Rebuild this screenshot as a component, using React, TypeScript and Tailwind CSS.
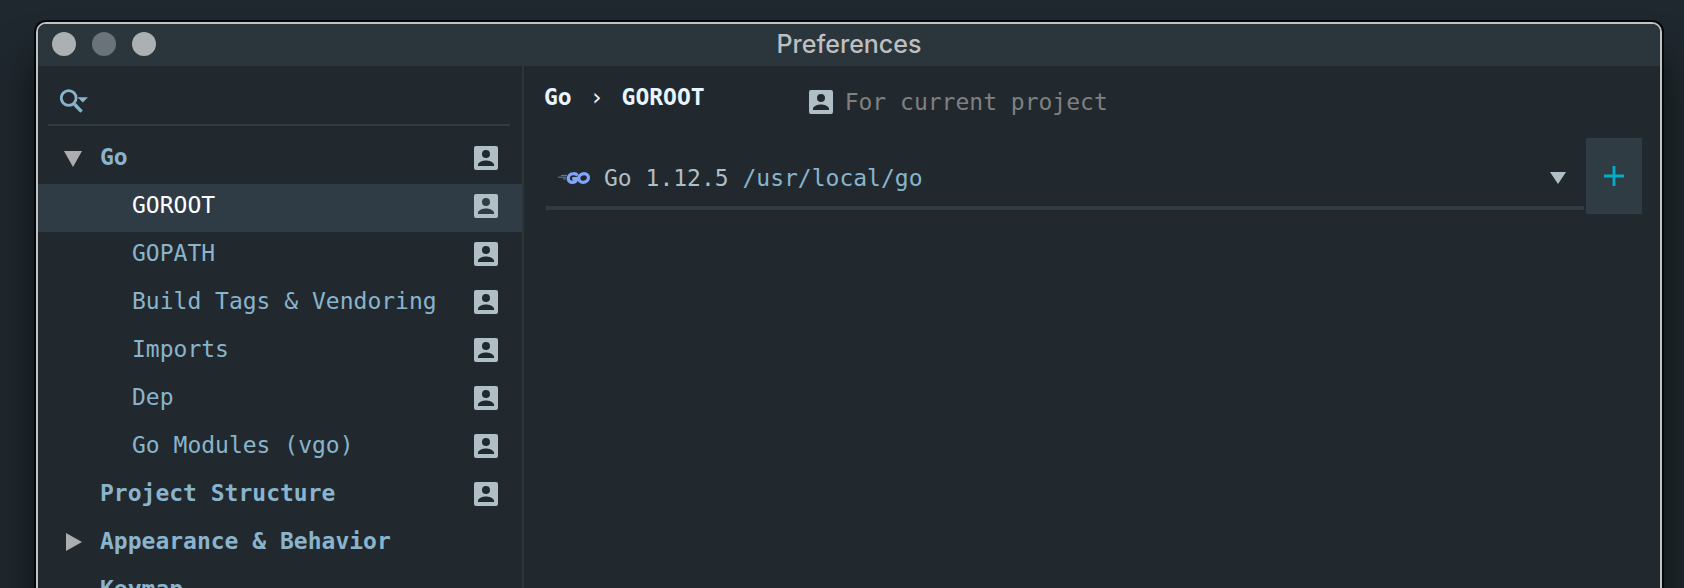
import { useState } from "react";

type Item = {
  label: string;
  level: 0 | 1;
  scoped: boolean;
  arrow?: "open" | "closed";
};

const items: Item[] = [
  { label: "Go", level: 0, scoped: true, arrow: "open" },
  { label: "GOROOT", level: 1, scoped: true },
  { label: "GOPATH", level: 1, scoped: true },
  { label: "Build Tags & Vendoring", level: 1, scoped: true },
  { label: "Imports", level: 1, scoped: true },
  { label: "Dep", level: 1, scoped: true },
  { label: "Go Modules (vgo)", level: 1, scoped: true },
  { label: "Project Structure", level: 0, scoped: true },
  { label: "Appearance & Behavior", level: 0, scoped: false, arrow: "closed" },
  { label: "Keymap", level: 0, scoped: false },
];

function ScopeIcon() {
  return (
    <svg className="size-6 shrink-0" viewBox="0 0 24 24" aria-hidden="true">
      <path
        fill="#b0bec5"
        fillRule="evenodd"
        d="M2 0h20a2 2 0 0 1 2 2v20a2 2 0 0 1-2 2H2a2 2 0 0 1-2-2V2a2 2 0 0 1 2-2ZM12 4a4 4 0 1 0 0 8a4 4 0 1 0 0-8ZM4 20h16v-1.300c0-2.700-5.300-4.200-8-4.200s-8 1.500-8 4.200Z"
      />
    </svg>
  );
}

function SearchIcon() {
  return (
    <svg className="h-6 w-7 shrink-0" viewBox="0 0 28 24" aria-hidden="true">
      <circle cx="8.700" cy="9" r="7.400" fill="none" stroke="#8ab4cc" strokeWidth="2.800" />
      <path d="M14.500 15.200 21.600 22.600" stroke="#8ab4cc" strokeWidth="3.400" />
      <path d="M17.500 8.300h10.500l-5.200 5.200Z" fill="#8ab4cc" />
    </svg>
  );
}

function GoLogo() {
  return (
    <svg className="h-3 w-8 shrink-0" viewBox="0 0 32 12" aria-hidden="true">
      <path d="M3 3.400h6M0 5.200h8.500M5 7h3.500" stroke="#5f7fc0" strokeWidth="1" />
      <g fill="none" stroke="#82a5fb" strokeWidth="3.200">
        <path d="M19.500 3.400A4.500 4.500 0 0 0 15.300 1.700C12.400 1.700 10.300 4 10.300 6.500c0 2.200 1.600 3.800 4 3.800 2.400 0 4.200-1.500 4.700-3.700H14.300" />
        <ellipse cx="25.600" cy="6" rx="4.900" ry="4.200" transform="rotate(-20 25.600 6)" />
      </g>
    </svg>
  );
}

function TreeArrow({ state }: { state?: "open" | "closed" }) {
  return (
    <svg className="size-[18px] shrink-0" viewBox="0 0 18 18" aria-hidden="true">
      {state === "open" && <path d="M0 2h18L9 18Z" fill="#adadad" />}
      {state === "closed" && <path d="M2 0v18l16-9Z" fill="#adadad" />}
    </svg>
  );
}

export default function App() {
  const [selected, setSelected] = useState("GOROOT");

  return (
    <div className="h-screen overflow-hidden bg-[#20282f] pt-[22px] pr-[22px] pl-9 font-['DejaVu_Sans_Mono',monospace] text-[23px] leading-7">
      <div className="flex min-h-[120vh] flex-col overflow-hidden rounded-t-[10px] border-2 border-[#bfc3c4] bg-[#21292f] shadow-[0_0_0_2px_#05080a,0_40px_40px_4px_#0f1414]">
        <header className="grid h-[42px] shrink-0 grid-cols-[1fr_auto_1fr] items-center bg-[#2a363b] px-3.5 pb-0.5">
          <div className="flex gap-4">
            <button aria-label="Close" className="size-6 rounded-full bg-[#abb0b2]" />
            <button aria-label="Minimize" className="size-6 rounded-full bg-[#6b737a]" />
            <button aria-label="Zoom" className="size-6 rounded-full bg-[#abb0b2]" />
          </div>
          <h1 className="font-[Inter,sans-serif] text-[25px] font-medium text-[#bdbfc0]">Preferences</h1>
        </header>

        <div className="flex flex-1">
          <aside className="w-[486px] shrink-0 border-r-2 border-[#2a363b]">
            <label className="mr-3 ml-2.5 flex h-[60px] items-center gap-3 border-b-2 border-[#2f3c44] pt-3 pl-3">
              <SearchIcon />
              <input
                type="text"
                aria-label="Search settings"
                className="min-w-0 flex-1 bg-transparent text-[#8ab4cc] outline-none"
              />
            </label>
            <ul className="pt-2.5">
              {items.map((item) => {
                const active = item.label === selected;
                return (
                  <li key={item.label}>
                    <button
                      onClick={() => setSelected(item.label)}
                      aria-current={active}
                      className={`flex h-12 w-full items-center pr-6 pb-1 pl-[26px] text-left ${
                        active ? "bg-[#2f3c45] text-white" : "text-[#8ab4cc]"
                      } ${item.level === 0 ? "font-bold" : ""}`}
                    >
                      <TreeArrow state={item.arrow} />
                      <span className={`flex-1 pb-0.5 whitespace-nowrap ${item.level === 0 ? "pl-[18px]" : "pl-[50px]"}`}>
                        {item.label}
                      </span>
                      {item.scoped && <ScopeIcon />}
                    </button>
                  </li>
                );
              })}
            </ul>
          </aside>

          <main className="min-w-0 flex-1 pr-[18px] pl-5">
            <div className="flex h-[72px] items-start gap-[104px] pt-4">
              <nav aria-label="Breadcrumb" className="flex gap-[18px] pt-px font-bold text-[#e6f5ff]">
                <a href="#go">Go</a>
                <span className="font-normal">›</span>
                <a href="#goroot">GOROOT</a>
              </nav>
              <div className="flex items-center gap-3 pt-1.5 text-[#808080]">
                <ScopeIcon />
                <span>For current project</span>
              </div>
            </div>

            <div className="flex items-start gap-0.5 pl-0.5">
              <div className="relative flex h-[72px] min-w-0 flex-1 items-center border-b-4 border-[#2f3c44] pt-3 pr-[18px] pl-3 focus-within:border-[#00aec9]">
                <GoLogo />
                <span className="flex-1 pl-3.5 whitespace-nowrap text-[#b0bec5]">
                  Go 1.12.5 <span className="text-[#8ab4cc]">/usr/local/go</span>
                </span>
                <svg className="h-3 w-4" viewBox="0 0 16 12" aria-hidden="true">
                  <path d="M0 0h16L8 12Z" fill="#b0bec5" />
                </svg>
                <select aria-label="Go SDK" className="absolute inset-0 h-full w-full cursor-pointer opacity-0">
                  <option>Go 1.12.5 /usr/local/go</option>
                </select>
              </div>
              <button aria-label="Add SDK" className="flex h-[76px] w-14 shrink-0 items-center justify-center bg-[#2f3c43]">
                <svg className="size-5" viewBox="0 0 20 20" aria-hidden="true">
                  <path d="M10 0v20M0 10h20" stroke="#00aec9" strokeWidth="2.800" />
                </svg>
              </button>
            </div>
          </main>
        </div>
      </div>
    </div>
  );
}
